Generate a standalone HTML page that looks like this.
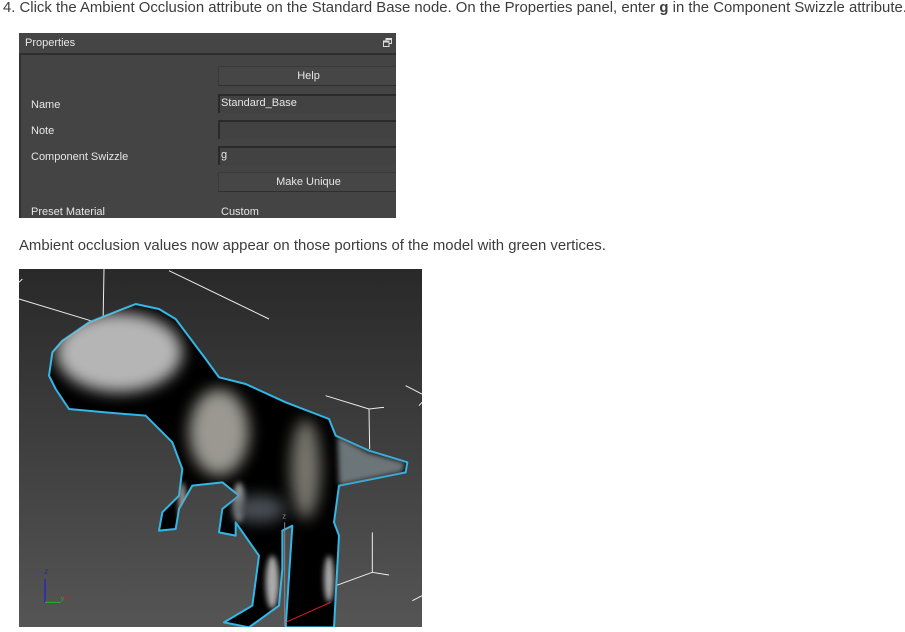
<!DOCTYPE html>
<html><head><meta charset="utf-8"><style>
body{margin:0;width:905px;height:628px;background:#fff;position:relative;overflow:hidden;font-family:"Liberation Sans",sans-serif;}
.t{position:absolute;font-size:14.9px;color:#3c3c3c;white-space:nowrap}
#panel{position:absolute;left:19px;top:33px;width:377px;height:185px;background:#444;overflow:hidden;font-family:"Liberation Sans",sans-serif;font-size:11px;color:#e6e6e6}
#title{position:absolute;left:0;top:0;width:377px;height:20px;background:#454545;border-bottom:2px solid #2e2e2e}
#title span{position:absolute;left:6px;top:4px}
.lbl{position:absolute;left:12px}
.btn{position:absolute;left:199px;width:180px;height:20px;background:#464646;border-top:1px solid #3a3a3a;border-left:1px solid #3a3a3a;border-bottom:1px solid #2f2f2f;box-sizing:border-box;text-align:center;line-height:19px}
.fld{position:absolute;left:199px;width:180px;height:19px;background:#424242;border-top:2px solid #2a2a2a;border-left:2px solid #2a2a2a;box-sizing:border-box;padding-left:1px;line-height:15px}
#vp{position:absolute;left:19px;top:269px;width:403px;height:358px;background:linear-gradient(#292929,#555 100%)}
</style></head><body>
<div class="t" style="left:3px;top:0px">4. Click the Ambient Occlusion attribute on the Standard Base node. On the Properties panel, enter <b>g</b> in the Component Swizzle attribute.</div>
<div id="panel">
<div id="title"><span>Properties</span>
<svg style="position:absolute;left:364px;top:5px" width="9" height="9" viewBox="0 0 9 9"><rect x="3" y="0.5" width="5.5" height="5" fill="none" stroke="#ddd"/><rect x="0.5" y="3" width="5.5" height="5.5" fill="#444" stroke="#ddd"/><rect x="0.5" y="3" width="5.5" height="1.5" fill="#ddd"/><rect x="3" y="0.5" width="5.5" height="1.5" fill="#ddd"/></svg>
</div>
<div class="btn" style="top:33px">Help</div>
<div class="lbl" style="top:66px">Name</div>
<div class="fld" style="top:61px">Standard_Base</div>
<div class="lbl" style="top:92px">Note</div>
<div class="fld" style="top:87px"></div>
<div class="lbl" style="top:118px">Component Swizzle</div>
<div class="fld" style="top:113px">g</div>
<div class="btn" style="top:139px">Make Unique</div>
<div class="lbl" style="top:173px">Preset Material</div>
<div style="position:absolute;left:202px;top:173px">Custom</div>
<div style="position:absolute;left:0;top:20px;width:2px;height:165px;background:#303030"></div>
</div>
<div class="t" style="left:19px;top:238px">Ambient occlusion values now appear on those portions of the model with green vertices.</div>
<div id="vp">
<svg width="403" height="358" viewBox="0 0 1209 1074">
<defs>
<filter id="b" x="-100%" y="-100%" width="300%" height="300%"><feGaussianBlur stdDeviation="22"/></filter>
<filter id="b2" x="-100%" y="-100%" width="300%" height="300%"><feGaussianBlur stdDeviation="8"/></filter>
<clipPath id="c"><path id="o" d="M100,250 L130,215 L210,160 L260,140 L350,105 L420,120 L470,150 L500,190 L560,270 L600,325 L680,345 L800,400 L930,450 L950,500 L1050,545 L1165,580 L1160,610 L960,650 L945,760 L960,800 L945,1075 L800,1075 L820,770 L790,785 L790,900 L780,1010 L690,1075 L615,1060 L700,1010 L720,860 L650,760 L650,800 L600,790 L610,720 L660,680 L610,640 L520,650 L480,720 L470,780 L420,785 L430,730 L480,680 L490,600 L460,520 L380,440 L260,430 L150,420 L110,360 L90,320 Z"/></clipPath>
</defs>
<g stroke="#eee" stroke-width="3" fill="none">
<path d="M0,90 L215,155 M255,0 L250,285 M450,5 L750,150 M0,40 L10,30 M920,380 L1050,420 L1095,415 M1050,420 L1052,540 M1160,350 L1209,375 M1060,790 L1060,910 L1110,918 M1060,910 L950,950 M1180,995 L1209,980 M1200,410 L1209,400"/>
</g>
<use href="#o" fill="#000" stroke="#2fb8e8" stroke-width="6" stroke-linejoin="round"/>
<g clip-path="url(#c)">
<ellipse cx="300" cy="250" rx="190" ry="120" fill="#b5b5b5" filter="url(#b)"/>
<ellipse cx="600" cy="490" rx="90" ry="130" fill="#9a9890" filter="url(#b)"/>
<ellipse cx="860" cy="600" rx="45" ry="150" fill="#77756d" filter="url(#b)"/>
<path d="M955,500 L1050,550 L1160,580 L1150,610 L960,650 Z" fill="#6c7478" filter="url(#b2)"/>
<ellipse cx="760" cy="940" rx="20" ry="80" fill="#aaa" filter="url(#b2)"/>
<ellipse cx="930" cy="930" rx="15" ry="70" fill="#aaa" filter="url(#b2)"/>
<ellipse cx="660" cy="700" rx="18" ry="60" fill="#999" filter="url(#b2)"/>
<ellipse cx="490" cy="700" rx="12" ry="60" fill="#999" filter="url(#b2)"/>
<ellipse cx="720" cy="720" rx="80" ry="40" fill="#4a5055" filter="url(#b)"/>
</g>
<path d="M797,760 L797,1070" stroke="#888" stroke-width="3"/>
<text x="790" y="748" fill="#888" font-size="22" font-family="Liberation Sans">z</text>
<path d="M800,1060 L935,1000" stroke="#d22" stroke-width="3"/>
<path d="M78,930 L78,1000 L125,1000" stroke="#22c" stroke-width="4" fill="none"/>
<path d="M78,1000 L125,1000" stroke="#2a2" stroke-width="4"/>
<text x="76" y="915" fill="#22c" font-size="24" font-family="Liberation Sans">z</text>
<text x="125" y="995" fill="#2a2" font-size="22" font-family="Liberation Sans">y</text>
<text x="138" y="990" fill="#c22" font-size="22" font-family="Liberation Sans">x</text>
</svg>
</div>
</body></html>
